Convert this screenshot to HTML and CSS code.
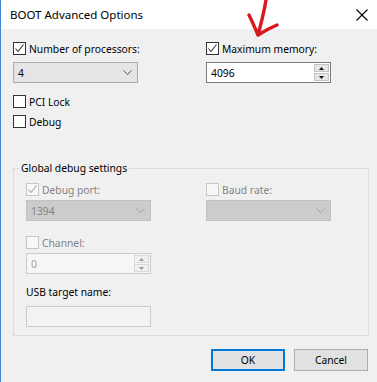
FILE: index.html
```html
<!DOCTYPE html>
<html lang="en">
<head>
    <meta charset="UTF-8">
    <meta name="viewport" content="width=device-width, initial-scale=1.0">
    <title>BOOT Advanced Options</title>
    <link rel="stylesheet" href="styles.css">
</head>
<body>
    <div class="window">
        <div class="titlebar">
            <span class="title">BOOT Advanced Options</span>
            <svg class="close" width="12" height="12" viewBox="0 0 12 12">
                <path d="M0.5 0.5 L11.5 11.5 M11.5 0.5 L0.5 11.5" stroke="#000" stroke-width="1.1" fill="none"/>
            </svg>
        </div>

        <div class="content">
            <div class="row">
                <div class="col">
                    <label class="check">
                        <span class="box"><svg width="11" height="11" viewBox="0 0 11 11"><path d="M1.5 5.5 L4 8.5 L9.5 1.5" stroke="#333" stroke-width="1.1" fill="none"/></svg></span>
                        Number of processors:
                    </label>
                    <div class="combo">
                        <span>4</span>
                        <svg width="9" height="5" viewBox="0 0 9 5"><path d="M0.5 0.5 L4.5 4.5 L8.5 0.5" stroke="#555" fill="none"/></svg>
                    </div>
                </div>
                <div class="col">
                    <label class="check">
                        <span class="box"><svg width="11" height="11" viewBox="0 0 11 11"><path d="M1.5 5.5 L4 8.5 L9.5 1.5" stroke="#333" stroke-width="1.1" fill="none"/></svg></span>
                        Maximum memory:
                    </label>
                    <div class="spin">
                        <span class="spin-value">4096</span>
                        <span class="spin-btns">
                            <span class="spin-btn"><svg width="5" height="3" viewBox="0 0 5 3"><path d="M0 3 L2.5 0 L5 3 Z" fill="#111"/></svg></span>
                            <span class="spin-btn"><svg width="5" height="3" viewBox="0 0 5 3"><path d="M0 0 L2.5 3 L5 0 Z" fill="#111"/></svg></span>
                        </span>
                    </div>
                </div>
            </div>

            <label class="check pci"><span class="box"></span>PCI Lock</label>
            <label class="check debug"><span class="box"></span>Debug</label>

            <fieldset class="group">
                <legend>Global debug settings</legend>
                <div class="row">
                    <div class="col group-col">
                        <label class="check disabled">
                            <span class="box"><svg width="11" height="11" viewBox="0 0 11 11"><path d="M1.5 5.5 L4 8.5 L9.5 1.5" stroke="#a8a8a8" stroke-width="1.1" fill="none"/></svg></span>
                            Debug port:
                        </label>
                        <div class="combo disabled">
                            <span>1394</span>
                            <svg width="9" height="5" viewBox="0 0 9 5"><path d="M0.5 0.5 L4.5 4.5 L8.5 0.5" stroke="#a0a0a0" fill="none"/></svg>
                        </div>
                    </div>
                    <div class="col">
                        <label class="check disabled"><span class="box"></span>Baud rate:</label>
                        <div class="combo disabled">
                            <span></span>
                            <svg width="9" height="5" viewBox="0 0 9 5"><path d="M0.5 0.5 L4.5 4.5 L8.5 0.5" stroke="#a0a0a0" fill="none"/></svg>
                        </div>
                    </div>
                </div>

                <label class="check disabled channel"><span class="box"></span>Channel:</label>
                <div class="spin disabled">
                    <span class="spin-value">0</span>
                    <span class="spin-btns">
                        <span class="spin-btn"><svg width="5" height="3" viewBox="0 0 5 3"><path d="M0 3 L2.5 0 L5 3 Z" fill="#9a9a9a"/></svg></span>
                        <span class="spin-btn"><svg width="5" height="3" viewBox="0 0 5 3"><path d="M0 0 L2.5 3 L5 0 Z" fill="#9a9a9a"/></svg></span>
                    </span>
                </div>

                <div class="field-label">USB target name:</div>
                <div class="textbox disabled"></div>
            </fieldset>

            <div class="buttons">
                <button class="btn default">OK</button>
                <button class="btn">Cancel</button>
            </div>
        </div>

        <!-- red marker scribbled on the screenshot -->
        <svg class="arrow" width="40" height="46" viewBox="0 0 40 46">
            <path d="M25 0 C23 12 20 24 17 35 M8 15 C11 21 14 28 17 35 C23 31 29 28 36 25" stroke="#d8191e" stroke-width="3.4" fill="none" stroke-linecap="round" stroke-linejoin="round"/>
        </svg>
    </div>
</body>
</html>
```

FILE: styles.css
```css
body {
    margin: 0;
    padding: 0;
    background: #f0f0f0;
    font-family: "Segoe UI", "Noto Sans", sans-serif;
    font-size: 10.3px;
    color: #000;
}
.window {
    position: relative;
    width: 377px;
    height: 382px;
    box-sizing: border-box;
    border-left: 1px solid #3f84d4;
    background: #f0f0f0;
    overflow: hidden;
}
.titlebar {
    height: 29px;
    background: #fff;
    display: flex;
    align-items: center;
    justify-content: space-between;
    padding: 0 9px 0 9px;
}
.title {
    font-size: 11.5px;
}
.close {
    margin-top: 1px;
}
.content {
    padding: 11px 8px 0 12px;
}
.row {
    display: flex;
}
.col {
    display: flex;
    flex-direction: column;
    flex: 0 0 193px;
}
.col + .col {
    flex: 1 1 auto;
}
.group-col {
    flex-basis: 180px;
}
.check {
    display: flex;
    align-items: center;
    gap: 3px;
    height: 17px;
}
.box {
    width: 13px;
    height: 13px;
    box-sizing: border-box;
    border: 1px solid #333;
    background: #fff;
    display: flex;
    align-items: center;
    justify-content: center;
}
.check.disabled {
    color: #838383;
}
.check.disabled .box {
    border-color: #c6c6c6;
    background: #f7f7f7;
}
.pci {
    margin-top: 10px;
}
.debug {
    margin-top: 3px;
}
.combo {
    margin-top: 5px;
    width: 125px;
    height: 21px;
    box-sizing: border-box;
    border: 1px solid #adadad;
    background: #e5e5e5;
    display: flex;
    align-items: center;
    justify-content: space-between;
    padding: 0 5px 0 4px;
}
.combo.disabled {
    margin-top: 2px;
    background: #cccccc;
    border-color: #c2c2c2;
    color: #838383;
}
.spin {
    margin-top: 5px;
    width: 125px;
    height: 21px;
    box-sizing: border-box;
    border: 1px solid #7a7a7a;
    background: #fff;
    display: flex;
    align-items: center;
    justify-content: space-between;
    padding: 0 1px 0 4px;
}
.spin.disabled {
    margin-top: 2px;
    border-color: #cccccc;
    background: #f6f6f6;
    color: #a0a0a0;
}
.spin-btns {
    display: flex;
    flex-direction: column;
    gap: 1px;
}
.spin-btn {
    width: 15px;
    height: 8px;
    box-sizing: border-box;
    border: 1px solid #c4c4c4;
    background: #e6e6e6;
    display: flex;
    align-items: center;
    justify-content: center;
}
.spin.disabled .spin-btn {
    border-color: #dadada;
    background: #f0f0f0;
}
.group {
    margin: 30px 0 0 0;
    border: 1px solid #dcdcdc;
    padding: 5px 12px 8px 12px;
}
.group legend {
    margin-left: -7px;
    padding: 0 2px;
    line-height: 16px;
}
.channel {
    margin-top: 13px;
}
.field-label {
    margin-top: 10px;
    line-height: 16px;
}
.textbox {
    margin-top: 6px;
    width: 125px;
    height: 21px;
    box-sizing: border-box;
    border: 1px solid #cccccc;
    background: #f3f3f3;
}
.buttons {
    display: flex;
    justify-content: flex-end;
    gap: 9px;
    margin-top: 13px;
    padding-right: 1px;
}
.btn {
    width: 74px;
    height: 22px;
    box-sizing: border-box;
    border: 1px solid #adadad;
    background: #e1e1e1;
    font-family: inherit;
    font-size: 10.3px;
    color: #000;
    padding: 0;
}
.btn.default {
    border: 2px solid #0078d7;
}
.arrow {
    position: absolute;
    left: 240px;
    top: 0;
}
```
